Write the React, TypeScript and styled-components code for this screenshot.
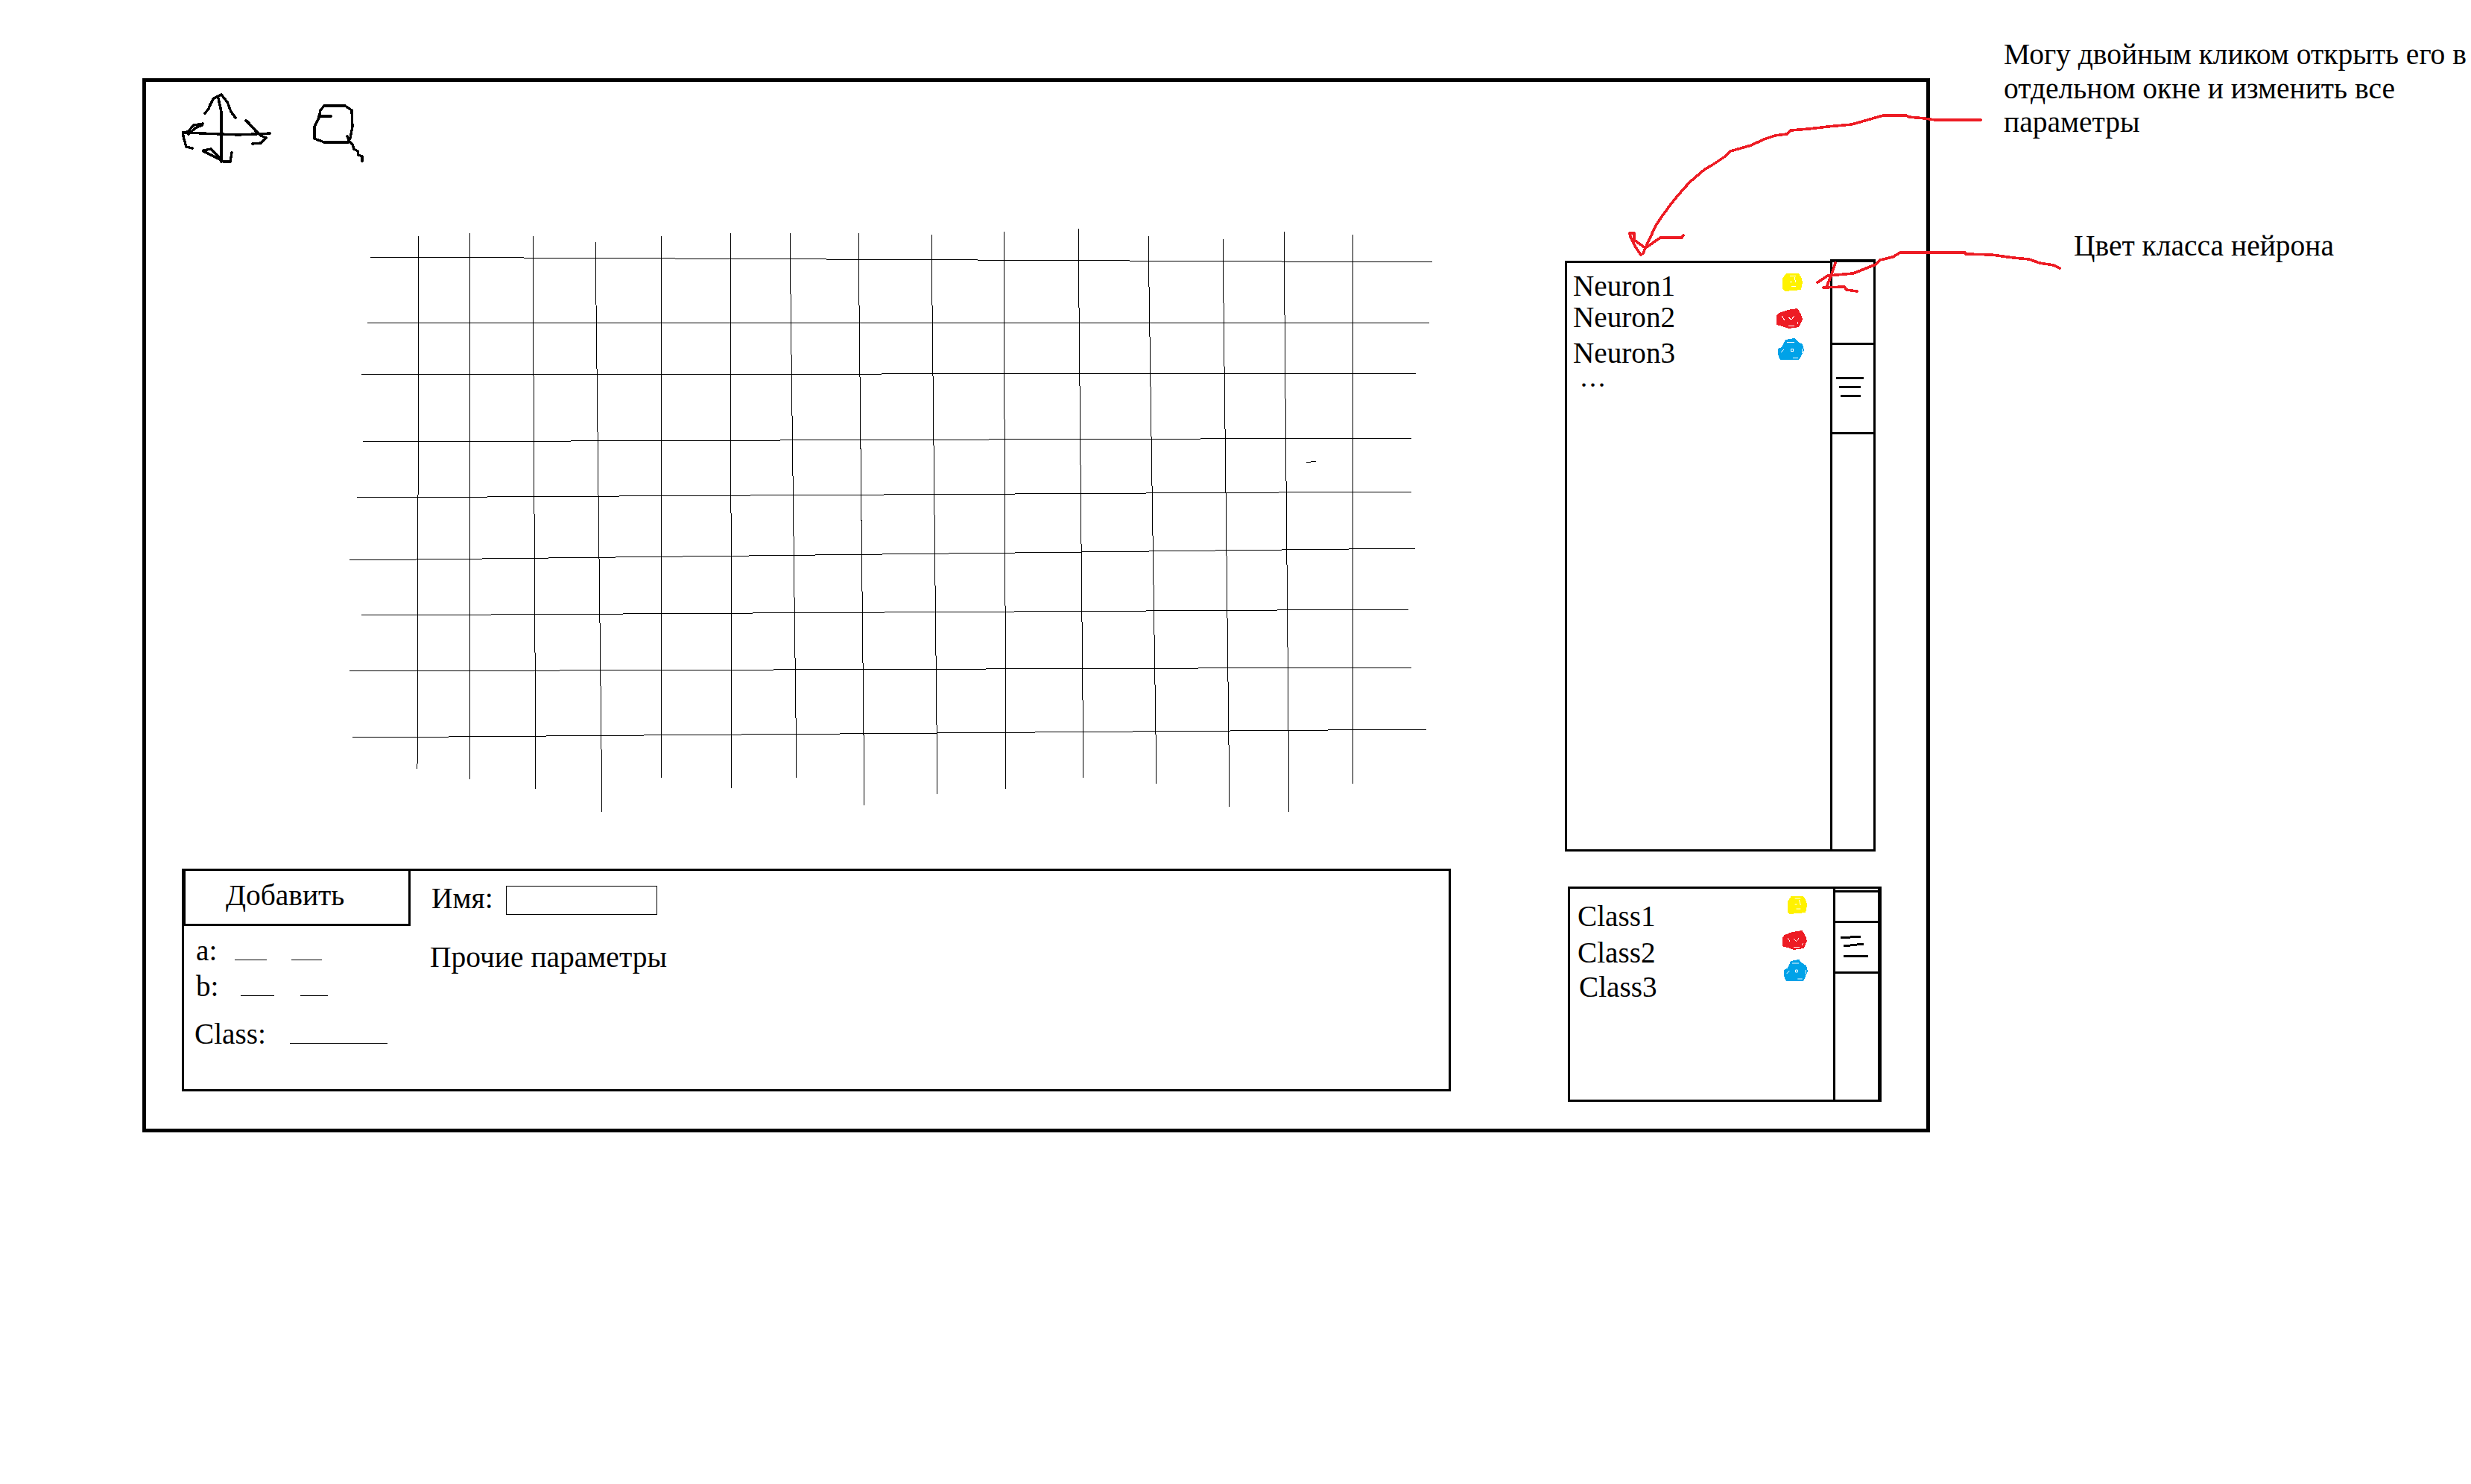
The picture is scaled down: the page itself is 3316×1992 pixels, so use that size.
import React from "react";
import styled, { createGlobalStyle } from "styled-components";

const GlobalStyle = createGlobalStyle`
  html, body { margin: 0; padding: 0; background: #fff; }
  body { font-family: "Liberation Serif", "Times New Roman", serif; color: #000; }
`;

const Page = styled.div`
  position: relative;
  width: 3316px;
  height: 1992px;
  padding: 105px 0 0 191px;
  box-sizing: border-box;
  overflow: hidden;
  background: #fff;
  font-size: 39.2px;
  line-height: 40px;
`;

const Frame = styled.div`
  box-sizing: border-box;
  width: 2399px;
  height: 1415px;
  border: 5px solid #000;
  padding-left: 48px;
  display: flex;
  align-items: flex-start;
`;

const LeftColumn = styled.div`
  width: 1703px;
  flex: none;
  display: flex;
  flex-direction: column;
`;

const Toolbar = styled.div`
  height: 102px;
  margin-top: 10px;
  display: flex;
  align-items: flex-start;
  gap: 54px;
`;

const ToolIcon = styled.svg`
  display: block;
  flex: none;
  fill: none;
  stroke: #000;
  stroke-width: 3.4;
  stroke-linejoin: round;
  stroke-linecap: round;
  shape-rendering: crispEdges;
`;

const GridSvg = styled.svg`
  display: block;
  margin: 83px 0 0 221px;
  width: 1460px;
  height: 787px;
  stroke: #000;
  stroke-width: 1;
  fill: none;
  shape-rendering: crispEdges;
`;

const AddPanel = styled.section`
  box-sizing: border-box;
  width: 1703px;
  height: 299px;
  margin-top: 74px;
  border: 3px solid #000;
  display: grid;
  grid-template-columns: 304px 1fr;
`;

const ParamsColumn = styled.div`
  display: flex;
  flex-direction: column;
`;

const AddButton = styled.div`
  box-sizing: border-box;
  height: 74px;
  border-left: 2px solid #000;
  border-right: 3px solid #000;
  border-bottom: 3px solid #000;
  padding: 13px 0 0 54px;
  line-height: 40px;
  font-size: 39.5px;
`;

const ParamRow = styled.div<{ $mt: number; $indent?: number }>`
  display: flex;
  height: 40px;
  line-height: 40px;
  margin-top: ${(p) => p.$mt}px;
  margin-left: ${(p) => 16 + (p.$indent ?? 0)}px;
`;

const ParamLabel = styled.span<{ $w: number }>`
  width: ${(p) => p.$w}px;
  flex: none;
`;

const Blank = styled.span<{ $w: number; $ml?: number }>`
  box-sizing: border-box;
  height: 33px;
  width: ${(p) => p.$w}px;
  margin-left: ${(p) => p.$ml ?? 0}px;
  border-bottom: 1px solid #000;
  flex: none;
`;

const ExtraColumn = styled.div`
  padding: 17px 0 0 28px;
  display: flex;
  flex-direction: column;
  font-size: 39.5px;
`;

const NameRow = styled.div`
  display: flex;
`;

const NameLabel = styled.span`
  width: 100px;
  flex: none;
`;

const NameInput = styled.div`
  box-sizing: border-box;
  width: 203px;
  height: 39px;
  margin-top: 3px;
  border: 1px solid #000;
`;

const ExtraText = styled.div`
  margin: 37px 0 0 -2px;
`;

const RightColumn = styled.div`
  margin-left: 153px;
  flex: none;
  display: flex;
  flex-direction: column;
  margin-top: 240px;
`;

const ListBox = styled.div`
  box-sizing: border-box;
  border: 3px solid #000;
  display: flex;
`;

const NeuronBox = styled(ListBox)`
  width: 417px;
  height: 793px;
`;

const ClassBox = styled(ListBox)`
  width: 421px;
  height: 289px;
  margin: 47px 0 0 4px;
`;

const ListBody = styled.div<{ $pad: number }>`
  flex: 1;
  min-width: 0;
  padding-left: ${(p) => p.$pad}px;
  display: flex;
  flex-direction: column;
`;

const ListRow = styled.div<{ $mt: number; $indent?: number }>`
  display: flex;
  height: 40px;
  margin-top: ${(p) => p.$mt}px;
  padding-left: ${(p) => p.$indent ?? 0}px;
`;

const Ellipsis = styled.div`
  margin: 4px 0 0 11px;
  font-size: 28px;
  font-weight: 700;
  letter-spacing: 5px;
  line-height: 24px;
`;

const BlobSvg = styled.svg<{ $mt: number; $mr: number }>`
  display: block;
  flex: none;
  align-self: flex-start;
  margin-left: auto;
  margin-top: ${(p) => p.$mt}px;
  margin-right: ${(p) => p.$mr}px;
  shape-rendering: crispEdges;
`;

const Track = styled.div`
  box-sizing: border-box;
  flex: none;
  border-left: 3px solid #000;
`;

const NeuronTrack = styled(Track)`
  width: 61px;
  margin: -5px -3px -3px 0;
  border-right: 3px solid #000;
  border-top: 4px solid #000;
  border-bottom: 3px solid #000;
  background: #fff;
  padding-top: 108px;
`;

const ClassTrack = styled(Track)`
  width: 62px;
  border-right: 2px solid #000;
  padding-top: 2px;
`;

const TrackCap = styled.div`
  border-top: 3px solid #000;
`;

const NeuronThumb = styled.div`
  box-sizing: border-box;
  height: 123px;
  border-top: 3px solid #000;
  border-bottom: 3px solid #000;
  padding-top: 43px;
  display: flex;
  flex-direction: column;
  gap: 9px;
`;

const ClassThumb = styled.div`
  box-sizing: border-box;
  height: 71px;
  margin-top: 38px;
  border-top: 3px solid #000;
  border-bottom: 3px solid #000;
`;

const GripLine = styled.div<{ $w: number; $ml: number }>`
  height: 3px;
  width: ${(p) => p.$w}px;
  margin-left: ${(p) => p.$ml}px;
  background: #000;
`;

const Grip = styled.svg`
  display: block;
  stroke: #000;
  stroke-width: 3;
  fill: none;
  shape-rendering: crispEdges;
`;

const Note = styled.div<{ $x: number; $y: number }>`
  position: absolute;
  left: ${(p) => p.$x}px;
  top: ${(p) => p.$y}px;
  font-size: 39.5px;
  line-height: 45.7px;
  white-space: nowrap;
`;

const InkOverlay = styled.svg`
  position: absolute;
  left: 0;
  top: 0;
  width: 3316px;
  height: 1992px;
  pointer-events: none;
  fill: none;
  stroke: #ed1c24;
  stroke-width: 3.6;
  stroke-linejoin: round;
  stroke-linecap: round;
  shape-rendering: crispEdges;
`;

const hLines = [
  [497, 345, 1922, 352], [493, 433, 1918, 433], [485, 503, 1900, 501],
  [487, 593, 1894, 588], [479, 668, 1894, 660], [469, 752, 1900, 736],
  [485, 826, 1890, 818], [469, 901, 1894, 896], [473, 990, 1914, 979],
];
const vLines = [
  [562, 317, 560, 1032], [630, 313, 630, 1046], [715, 317, 719, 1059],
  [799, 323, 808, 1090], [887, 317, 887, 1044], [980, 313, 982, 1058],
  [1060, 313, 1069, 1044], [1152, 313, 1160, 1081], [1250, 315, 1258, 1066],
  [1347, 311, 1350, 1059], [1447, 307, 1454, 1044], [1541, 317, 1552, 1052],
  [1641, 321, 1650, 1083], [1723, 311, 1730, 1090], [1815, 315, 1815, 1052],
  [1753, 621, 1766, 619],
];

type BlobKind = "yellow" | "red" | "blue";
const blobs: Record<BlobKind, { fill: string; vb: string; shape: string; specks: string }> = {
  yellow: {
    fill: "#fff200",
    vb: "0 0 27 25",
    shape: "5,1 22,1 26,8 27,13 25,23 3,25 0,22 0,8",
    specks: "M10 4h8M16 6l2 7M10 12h3M12 18h6",
  },
  red: {
    fill: "#ed1c24",
    vb: "0 0 35 27",
    shape: "3,6 15,2 28,0 33,8 35,15 30,25 16,27 8,24 0,22 0,10",
    specks: "M7 10l4 6M24 10l-4 5l-4-3M16 23h8M29 18l-1 3",
  },
  blue: {
    fill: "#00a2e8",
    vb: "0 0 35 29",
    shape: "10,2 22,0 27,5 33,8 35,16 30,26 28,29 3,29 0,22 0,14 5,12",
    specks: "M12 5h10M17 14h3v3h-3zM4 19l4-4M20 26h7M32 14v6",
  },
};

const Blob = ({ kind, w, h, mt, mr }: { kind: BlobKind; w: number; h: number; mt: number; mr: number }) => {
  const b = blobs[kind];
  return (
    <BlobSvg $mt={mt} $mr={mr} width={w} height={h} viewBox={b.vb} preserveAspectRatio="none">
      <polygon points={b.shape} fill={b.fill} />
      <path d={b.specks} fill="none" stroke="#fff" strokeWidth="1" />
    </BlobSvg>
  );
};

const MoveIcon = () => (
  <ToolIcon width="120" height="102" viewBox="244 120 120 102">
    <polyline points="275,152 280,146 282,140 287,132 297,127 305,137 310,150 316,158" />
    <polyline points="286,133 281,143" />
    <polyline points="293,132 297,150 297,217" />
    <polyline points="248,178 320,181 362,179" />
    <polyline points="272,166 260,168 252,177 245,178 247,187 250,197 258,199" />
    <polyline points="271,168 262,172 253,180" />
    <polyline points="330,162 340,172 350,182 357,185 350,192 339,193" />
    <polyline points="332,163 345,178" />
    <polyline points="273,202 283,200 295,212" />
    <polyline points="273,203 297,215 300,217 309,217 311,205" />
  </ToolIcon>
);

const SearchIcon = () => (
  <ToolIcon width="72" height="102" viewBox="418 120 72 102">
    <polygon points="435,142 463,142 472,148 473,170 470,185 467,191 435,191 422,186 422,170 428,158 430,148" />
    <polyline points="428,156 444,156" />
    <polyline points="466,183 469,190 473,194 475,200 480,203 481,208 486,210 486,216" />
  </ToolIcon>
);

export default function App() {
  return (
    <>
      <GlobalStyle />
      <Page>
        <Frame>
          <LeftColumn>
            <Toolbar>
              <MoveIcon />
              <SearchIcon />
            </Toolbar>
            <GridSvg viewBox="465 305 1460 787">
              {hLines.map((l, i) => (
                <line key={`h${i}`} x1={l[0]} y1={l[1]} x2={l[2]} y2={l[3]} />
              ))}
              {vLines.map((l, i) => (
                <line key={`v${i}`} x1={l[0]} y1={l[1]} x2={l[2]} y2={l[3]} />
              ))}
            </GridSvg>
            <AddPanel>
              <ParamsColumn>
                <AddButton>Добавить</AddButton>
                <ParamRow $mt={13}>
                  <ParamLabel $w={52}>a:</ParamLabel>
                  <Blank $w={43} />
                  <Blank $w={41} $ml={33} />
                </ParamRow>
                <ParamRow $mt={8}>
                  <ParamLabel $w={60}>b:</ParamLabel>
                  <Blank $w={45} />
                  <Blank $w={37} $ml={35} />
                </ParamRow>
                <ParamRow $mt={24} $indent={-2}>
                  <ParamLabel $w={128}>Class:</ParamLabel>
                  <Blank $w={131} />
                </ParamRow>
              </ParamsColumn>
              <ExtraColumn>
                <NameRow>
                  <NameLabel>Имя:</NameLabel>
                  <NameInput />
                </NameRow>
                <ExtraText>Прочие параметры</ExtraText>
              </ExtraColumn>
            </AddPanel>
          </LeftColumn>
          <RightColumn>
            <NeuronBox>
              <ListBody $pad={8}>
                <ListRow $mt={11}>
                  Neuron1
                  <Blob kind="yellow" w={27} h={25} mt={2} mr={37} />
                </ListRow>
                <ListRow $mt={2}>
                  Neuron2
                  <Blob kind="red" w={35} h={27} mt={8} mr={37} />
                </ListRow>
                <ListRow $mt={8}>
                  Neuron3
                  <Blob kind="blue" w={35} h={29} mt={0} mr={35} />
                </ListRow>
                <Ellipsis>...</Ellipsis>
              </ListBody>
              <NeuronTrack>
                <NeuronThumb>
                  <GripLine $w={37} $ml={5} />
                  <GripLine $w={29} $ml={9} />
                  <GripLine $w={27} $ml={11} />
                </NeuronThumb>
              </NeuronTrack>
            </NeuronBox>
            <ClassBox>
              <ListBody $pad={10}>
                <ListRow $mt={17}>
                  Class1
                  <Blob kind="yellow" w={26} h={25} mt={-8} mr={35} />
                </ListRow>
                <ListRow $mt={9}>
                  Class2
                  <Blob kind="red" w={33} h={26} mt={-10} mr={35} />
                </ListRow>
                <ListRow $mt={6} $indent={2}>
                  Class3
                  <Blob kind="blue" w={32} h={29} mt={-17} mr={34} />
                </ListRow>
              </ListBody>
              <ClassTrack>
                <TrackCap />
                <ClassThumb>
                  <Grip width="57" height="65" viewBox="2463 1239 57 65">
                    <polyline points="2470,1259 2497,1257" />
                    <polyline points="2474,1270 2501,1267" />
                    <polyline points="2474,1283 2507,1283" />
                  </Grip>
                </ClassThumb>
              </ClassTrack>
            </ClassBox>
          </RightColumn>
        </Frame>
        <Note $x={2689} $y={51}>
          Могу двойным кликом открыть его в
          <br />
          отдельном окне и изменить все
          <br />
          параметры
        </Note>
        <Note $x={2783} $y={308}>Цвет класса нейрона</Note>
        <InkOverlay viewBox="0 0 3316 1992">
          <polyline points="2658,161 2597,161 2583,159 2562,157 2558,155 2527,155 2513,159 2485,167 2453,170 2427,173 2403,175 2398,180 2382,182 2367,187 2350,195 2322,203 2315,210 2297,222 2288,227 2267,245 2252,262 2240,277 2227,295 2222,303 2213,322 2208,333 2205,340 2202,342 2195,332 2188,318 2187,313 2193,313 2193,322 2208,333 2228,319 2257,319 2259,316" />
          <polyline points="2764,360 2756,356 2737,353 2723,348 2702,346 2673,342 2638,341 2637,339 2550,339 2540,345 2523,349 2517,355 2487,367 2453,370 2439,379" />
          <polyline points="2463,353 2458,368 2452,383" />
          <polyline points="2447,386 2475,385 2478,389 2492,391" />
        </InkOverlay>
      </Page>
    </>
  );
}
